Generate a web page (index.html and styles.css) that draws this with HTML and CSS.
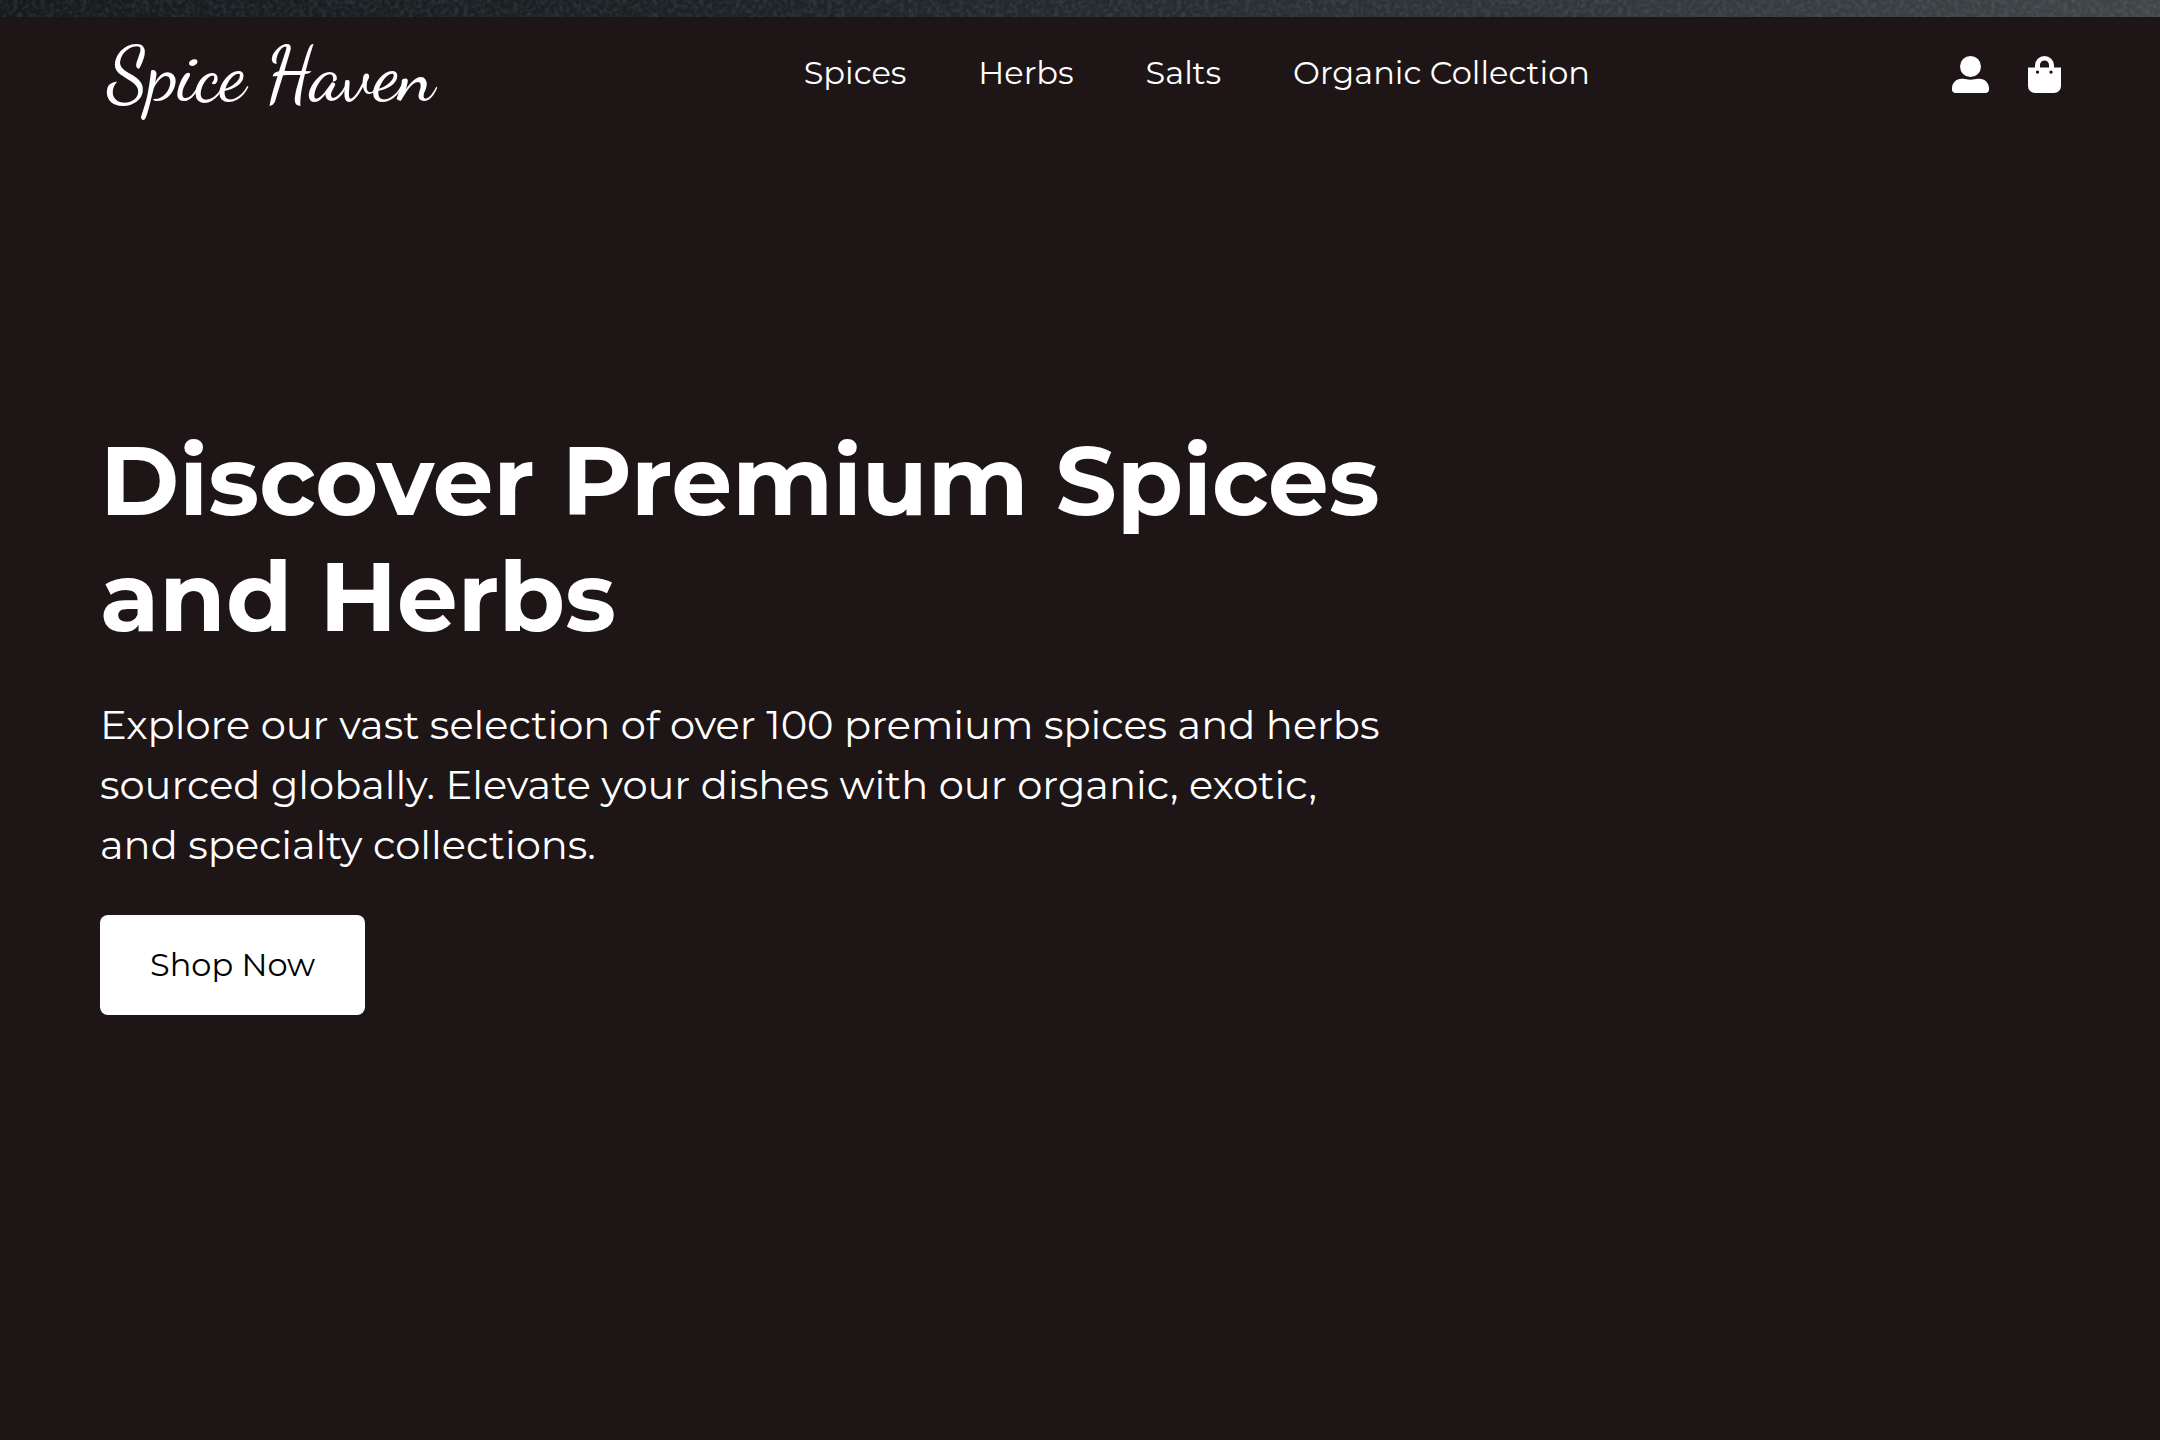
FILE: index.html
```html
<!DOCTYPE html>
<html lang="en">
<head>
<meta charset="utf-8">
<meta name="viewport" content="width=device-width, initial-scale=1">
<title>Spice Haven</title>
<link rel="stylesheet" href="styles.css">
</head>
<body>
<div class="slate" aria-hidden="true">
  <svg class="slate-grain" width="100%" height="100%">
    <filter id="grain" x="0" y="0" width="100%" height="100%">
      <feTurbulence type="fractalNoise" baseFrequency="0.22" numOctaves="3" seed="4"/>
      <feColorMatrix values="0 0 0 0 0.5  0 0 0 0 0.55  0 0 0 0 0.57  0.3 0 0 0 -0.12"/>
    </filter>
    <rect width="100%" height="100%" filter="url(#grain)"/>
  </svg>
</div>
<header class="header">
  <a class="logo" href="#">Spice Haven</a>
  <nav class="nav" aria-label="Main">
    <a href="#spices">Spices</a>
    <a href="#herbs">Herbs</a>
    <a href="#salts">Salts</a>
    <a href="#organic">Organic Collection</a>
  </nav>
  <div class="actions">
    <a href="#account" aria-label="Account">
      <svg class="icon" width="37" height="37" viewBox="0 0 37 37" fill="currentColor"><circle cx="18.500" cy="10.500" r="10.500"/><path d="M9.500 22.800h2c2 0 3.800 1 7 1s5-1 7-1h2c5.200 0 9.500 4.200 9.500 9.500v1.200c0 2-1.500 3.500-3.500 3.500h-30C1.500 37 0 35.500 0 33.500v-1.200c0-5.300 4.300-9.500 9.500-9.500z"/></svg>
    </a>
    <a href="#cart" aria-label="Shopping bag">
      <svg class="icon" width="33" height="37" viewBox="0 0 33 37" fill="currentColor" fill-rule="evenodd"><path d="M0 11.500h7V9.500a9.500 9.500 0 0 1 19 0v2h7V30a7 7 0 0 1-7 7H7a7 7 0 0 1-7-7zM12 11.500h9V9a4.500 4.500 0 0 0-9 0zM9.500 14.400a1.700 1.700 0 1 0 0 3.400a1.700 1.700 0 1 0 0-3.400zM23 14.400a1.700 1.700 0 1 0 0 3.400a1.700 1.700 0 1 0 0-3.400z"/></svg>
    </a>
  </div>
</header>
<main class="hero">
  <h1>Discover Premium Spices and Herbs</h1>
  <p>Explore our vast selection of over 100 premium spices and herbs sourced globally. Elevate your dishes with our organic, exotic, and specialty collections.</p>
  <button class="shop" type="button">Shop Now</button>
</main>
</body>
</html>
```
FILE: styles.css
```css
* {
  box-sizing: border-box;
}

body {
  margin: 0;
  min-height: 100vh;
  display: flex;
  flex-direction: column;
  background: #1e1516;
  color: #fff;
  font-family: "Montserrat", "Inter", sans-serif;
}

a {
  color: inherit;
  text-decoration: none;
}

.slate {
  height: 17px;
  overflow: hidden;
  background: linear-gradient(90deg, #161b1e, #1c2225 35%, #2e3438 70%, #404548);
}

.slate-grain {
  display: block;
}

.header {
  display: flex;
  align-items: flex-start;
  justify-content: space-between;
  padding: 20px 99px 20px 100px;
}

.logo {
  padding: 0 7px;
  font-family: "Dancing Script", "Lato", cursive;
  font-size: 75px;
  font-weight: 500;
  line-height: 76px;
}

.nav {
  display: flex;
  gap: 72px;
  padding-top: 16px;
  font-size: 32px;
  line-height: 40px;
}

.actions {
  display: flex;
  gap: 39px;
  padding-top: 19px;
}

.icon {
  display: block;
}

.hero {
  flex: 1;
  display: flex;
  flex-direction: column;
  align-items: flex-start;
  justify-content: center;
  padding: 0 100px 136px;
}

h1 {
  max-width: 1300px;
  margin: 0 0 40px;
  font-size: 96px;
  font-weight: 700;
  line-height: 116px;
}

p {
  max-width: 1300px;
  margin: 0 0 40px;
  font-size: 40px;
  line-height: 60px;
}

.shop {
  padding: 30px 50px;
  border: 0;
  border-radius: 8px;
  background: #fff;
  color: #000;
  font-family: inherit;
  font-size: 32px;
  font-weight: 400;
  line-height: 40px;
}
```
